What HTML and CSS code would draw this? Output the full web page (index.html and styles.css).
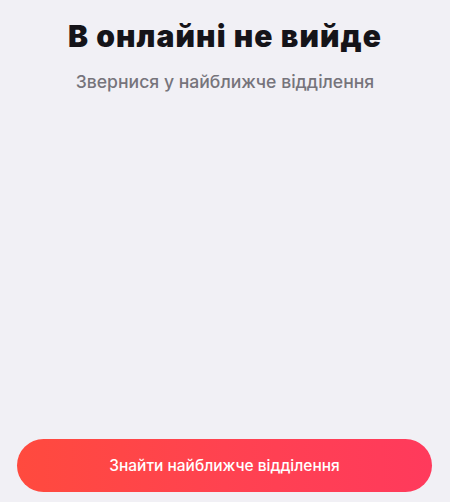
FILE: index.html
```html
<!DOCTYPE html>
<html lang="uk">
<head>
<meta charset="utf-8">
<link rel="stylesheet" href="styles.css">
</head>
<body>
<main class="screen">
  <header class="head">
    <h1 class="title">В онлайні не вийде</h1>
    <p class="subtitle">Звернися у найближче відділення</p>
  </header>
  <div class="spacer"></div>
  <button class="cta">Знайти найближче відділення</button>
</main>
</body>
</html>
```
FILE: styles.css
```css
html, body {
  margin: 0;
  padding: 0;
  background: #f1f0f5;
}
.screen {
  width: 450px;
  height: 502px;
  display: flex;
  flex-direction: column;
  box-sizing: border-box;
  padding: 18px 17px 10px 17px;
  font-family: Inter, Roboto, "Noto Sans", sans-serif;
}
.head {
  text-align: center;
}
.title {
  margin: 0;
  font-size: 30px;
  font-weight: 900;
  line-height: 36px;
  color: #151419;
  letter-spacing: 1.1px;
}
.subtitle {
  margin: 17px 0 0;
  font-size: 17.6px;
  font-weight: 500;
  line-height: 22px;
  color: #76747b;
}
.spacer {
  flex: 1;
}
.cta {
  height: 53px;
  margin-right: 1px;
  border: 0;
  border-radius: 27px;
  background: linear-gradient(90deg, #ff4a3e 0%, #ff4250 50%, #ff3a5c 100%);
  color: #fff;
  font-family: Inter, Roboto, "Noto Sans", sans-serif;
  font-size: 15.5px;
  font-weight: 500;
  padding: 0;
}
```
